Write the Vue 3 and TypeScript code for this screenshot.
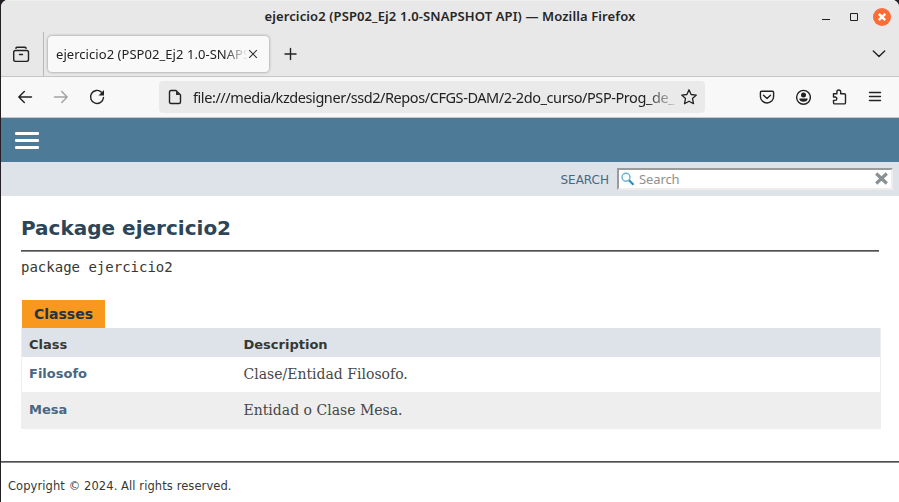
<script setup lang="ts">
interface ClassRow {
  name: string
  description: string
}

const windowTitle = 'ejercicio2 (PSP02_Ej2 1.0-SNAPSHOT API) — Mozilla Firefox'
const tabTitle = 'ejercicio2 (PSP02_Ej2 1.0-SNAPS'
const address = 'file:///media/kzdesigner/ssd2/Repos/CFGS-DAM/2-2do_curso/PSP-Prog_de_'
const rows: ClassRow[] = [
  { name: 'Filosofo', description: 'Clase/Entidad Filosofo.' },
  { name: 'Mesa', description: 'Entidad o Clase Mesa.' },
]
</script>

<template>
  <div class="desktop">
    <div class="window">
      <header class="titlebar">
        <span class="title">{{ windowTitle }}</span>
        <div class="controls">
          <svg width="74" height="32" viewBox="822 0 74 32">
            <path d="M822 18.5h8" class="ctl" />
            <path d="M850.5 12.500h7v7h-7z" class="ctl" />
            <circle cx="882" cy="16" r="9" fill="#fc6d35" />
            <path d="M878.800 12.800l6.400 6.400M885.200 12.800l-6.400 6.400" stroke="#fff" stroke-width="2.400" />
          </svg>
        </div>
      </header>

      <div class="tabbar">
        <div class="recent">
          <svg class="icon" width="18" height="18" viewBox="0 0 18 18">
            <path d="M3.800 3.200Q4.100 2.300 5.500 2.300h7Q13.900 2.300 14.200 3.200" />
            <rect x="1.700" y="5.500" width="14.800" height="10.900" rx="1.800" />
            <path d="M7.500 9.500h3" />
          </svg>
        </div>
        <div class="tab">
          <span class="tab-title">{{ tabTitle }}</span>
          <svg class="tab-close" width="10" height="10" viewBox="0 0 10 10"><path d="M1.200 1.200l7.600 7.600M8.800 1.200l-7.600 7.600" /></svg>
        </div>
        <svg class="icon plus" width="14" height="14" viewBox="0 0 14 14"><path d="M6.500 1.500v11M1 7h11" /></svg>
        <svg class="icon all-tabs" width="14" height="10" viewBox="0 0 14 10"><path d="M1.300 2l5.700 5.500L12.700 2" /></svg>
      </div>

      <div class="toolbar">
        <div class="nav-buttons">
          <svg class="icon" width="16" height="16" viewBox="0 0 16 16"><path d="M14.500 8H1.800M7.300 2.500L1.800 8l5.500 5.500" /></svg>
          <svg class="icon faded" width="16" height="16" viewBox="0 0 16 16"><path d="M1.500 8h12.700M8.700 2.500L14.200 8l-5.500 5.500" /></svg>
          <svg class="icon" width="16" height="16" viewBox="0 0 16 16">
            <path d="M12.500 3.200A6.500 6.500 0 1 0 14.500 8.500" />
            <path d="M15 1v5.500H9.500z" fill="#222" stroke="none" />
          </svg>
        </div>
        <div class="urlbar">
          <svg class="icon" width="14" height="16" viewBox="0 0 14 16">
            <path d="M3 1.500h5l4.500 4.500v7q0 1.500-1.500 1.500H3Q1.500 14.500 1.500 13V3Q1.500 1.500 3 1.500z" />
            <path d="M8 1.500V6h4.500z" fill="#333" stroke="none" />
          </svg>
          <span class="url">{{ address }}</span>
          <svg class="icon star" width="18" height="18" viewBox="0 0 18 18">
            <path d="M9 1.800l2.100 4.700 5.200.600-3.800 3.500 1 5.100L9 13.200l-4.500 2.500 1-5.100L1.700 7.100l5.200-.6z" />
          </svg>
        </div>
        <div class="actions">
          <svg class="icon" width="16" height="16" viewBox="0 0 16 16">
            <path d="M2.600 2.200h10.800q1.200 0 1.200 1.200v4a6.600 6.600 0 0 1-13.200 0v-4q0-1.200 1.200-1.200zM4.500 6.200L8 9.500l3.500-3.300" />
          </svg>
          <svg class="icon" width="16" height="16" viewBox="0 0 16 16">
            <circle cx="8.500" cy="8.300" r="6.900" />
            <circle cx="8.500" cy="6" r="2.500" fill="#222" stroke="none" />
            <path d="M4.300 9.500h8.400c0 2.100-1.800 3.300-4.200 3.300s-4.200-1.200-4.200-3.300z" fill="#222" stroke="none" />
          </svg>
          <svg class="icon" width="16" height="16" viewBox="0 0 16 16">
            <path d="M2.500 4.800h3.400V2.900a1.900 1.900 0 0 1 3.800 0v1.900h3.600q1.200 0 1.200 1.200v7.700q0 1.200-1.200 1.200H3.700q-1.200 0-1.200-1.200v-2.300h1.600a1.600 1.600 0 0 0 0-3.400H2.500z" />
          </svg>
          <svg class="icon" width="16" height="16" viewBox="0 0 16 16"><path d="M2.500 3.500h11M2.500 7.500h11M2.500 11.500h11" /></svg>
        </div>
      </div>

      <nav class="topnav">
        <div class="burger"><i></i><i></i><i></i></div>
      </nav>
      <div class="subnav">
        <label class="search-label">SEARCH</label>
        <div class="search-box">
          <svg width="14" height="14" viewBox="0 0 14 14">
            <circle cx="5" cy="5.300" r="4" fill="#fafeff" stroke="#69b1cd" stroke-width="1.400" />
            <path d="M8 8.300l4.500 4.500" stroke="#2d8fc7" stroke-width="2.300" />
          </svg>
          <span class="placeholder">Search</span>
          <svg class="clear" width="13" height="13" viewBox="0 0 13 13"><path d="M1.200 1.500l10.600 10M11.800 1.500l-10.600 10" stroke="#8b9094" stroke-width="3.200" /></svg>
        </div>
      </div>

      <main class="content">
        <h1>Package ejercicio2</h1>
        <div class="rule title-rule"></div>
        <div class="signature">package ejercicio2</div>
        <div class="caption">Classes</div>
        <div class="summary">
          <div class="row head"><span>Class</span><span>Description</span></div>
          <div v-for="row in rows" :key="row.name" class="row">
            <a>{{ row.name }}</a>
            <span class="desc">{{ row.description }}</span>
          </div>
        </div>
      </main>

      <div class="rule"></div>
      <footer class="footer">Copyright © 2024. All rights reserved.</footer>
    </div>
  </div>
</template>

<style>
body {
  background: #231f24;
  overflow: hidden;
}
</style>

<style scoped>
* {
  box-sizing: border-box;
}
svg {
  display: block;
  flex: none;
}
.desktop {
  width: 899px;
  height: 502px;
  padding-left: 1px;
  background: #231f24;
  overflow: hidden;
}
.window {
  height: 502px;
  display: flex;
  flex-direction: column;
  border-radius: 7px 7px 0 0;
  overflow: hidden;
  background: #fff;
  font-family: "DejaVu Sans", sans-serif;
  color: #353833;
}
.window > * {
  flex: none;
}
.titlebar {
  height: 32px;
  display: grid;
  grid-template-columns: 1fr auto 1fr;
  align-items: center;
  background: #e8e8e8;
  border-top: 1px solid #efefef;
}
.title {
  grid-column: 2;
  height: 32px;
  font: 600 13px/30px "Noto Sans", sans-serif;
  letter-spacing: 0.11px;
  color: #262626;
  white-space: nowrap;
}
.controls {
  justify-self: end;
  padding-right: 3px;
}
.ctl {
  fill: none;
  stroke: #1f1f1f;
}
.tabbar {
  height: 45px;
  display: flex;
  align-items: center;
  background: #e8e8e8;
  border-bottom: 1px solid #c5c5c5;
}
.icon {
  fill: none;
  stroke: #222;
  stroke-width: 1.4;
  stroke-linejoin: round;
  stroke-linecap: round;
}
.faded {
  opacity: 0.4;
}
.star {
  stroke-width: 1.3;
}
.recent {
  width: 43px;
  height: 44px;
  display: flex;
  align-items: center;
  padding-left: 11px;
  border-right: 1px solid #b8b8b8;
}
.tab {
  width: 221px;
  height: 36px;
  margin-left: 4px;
  padding: 0 11px 0 8px;
  display: flex;
  align-items: center;
  border-radius: 4px;
  background: #f9f9fa;
  box-shadow: 0 0 3px rgba(0, 0, 0, 0.42);
}
.tab-title {
  width: 192px;
  flex: none;
  white-space: nowrap;
  font: 13px/20px "Noto Sans", sans-serif;
  letter-spacing: 0.05px;
  color: #222;
  mask-image: linear-gradient(to right, #000 168px, transparent 192px);
}
.tab-close {
  fill: none;
  stroke: #333;
  stroke-width: 1.2;
}
.plus {
  margin-left: 15px;
}
.all-tabs {
  margin-left: auto;
  margin-right: 13px;
}
.toolbar {
  height: 41px;
  display: flex;
  align-items: center;
  padding: 0 16px;
  background: #f8f8f8;
  border-bottom: 1px solid #c4c8cb;
}
.nav-buttons {
  display: flex;
  gap: 20px;
}
.urlbar {
  width: 546px;
  height: 32px;
  margin-left: 54px;
  padding: 0 7px 0 9px;
  display: flex;
  align-items: center;
  border-radius: 4px;
  background: #eaeaea;
}
.url {
  width: 482px;
  flex: none;
  margin-left: 11px;
  margin-right: 5px;
  white-space: nowrap;
  font: 14.500px/24px "Noto Sans", sans-serif;
  letter-spacing: -0.43px;
  color: #222;
  mask-image: linear-gradient(to right, #000 454px, transparent 486px);
}
.actions {
  display: flex;
  gap: 20px;
  margin-left: auto;
}
.topnav {
  height: 44px;
  padding: 14px 0 0 14px;
  background: #4d7a97;
}
.burger {
  width: 24px;
  display: grid;
  gap: 4px;
}
.burger i {
  height: 3px;
  border-radius: 1px;
  background: #fff;
}
.subnav {
  height: 34px;
  display: flex;
  align-items: center;
  justify-content: flex-end;
  gap: 8px;
  padding: 0 6px 0 0;
  background: #dee3e9;
}
.search-label {
  padding-top: 2px;
  font-size: 12px;
  color: #4a6782;
}
.search-box {
  width: 276px;
  height: 22px;
  display: flex;
  align-items: center;
  padding: 0 3px 0 2px;
  background: #fff;
  border: 2px solid;
  border-color: #9b9b9b #ededed #ededed #9b9b9b;
}
.clear {
  margin-bottom: 2px;
}
.placeholder {
  flex: 1;
  margin-left: 4px;
  font: 13px/18px "Noto Sans", sans-serif;
  letter-spacing: -0.1px;
  color: #909090;
}
.content {
  height: 265px;
  padding: 20px 19px 0 20px;
}
h1 {
  height: 34px;
  margin: 0;
  font-size: 20px;
  line-height: 24px;
  color: #2c4557;
}
.rule {
  height: 2px;
  background: linear-gradient(#505054 50%, #868686 50%);
}
.title-rule {
  margin-right: 1px;
}
.signature {
  height: 48px;
  padding-top: 5px;
  font: 14px/20px "DejaVu Sans Mono", monospace;
}
.caption {
  width: 83px;
  height: 28px;
  margin-left: 1px;
  padding-left: 12px;
  font-size: 14px;
  font-weight: bold;
  line-height: 28px;
  background: #f8981d;
  color: #253441;
}
.summary {
  width: 860px;
  border: solid #eee;
  border-width: 0 1px;
}
.row {
  height: 35px;
  display: grid;
  grid-template-columns: 214.500px 1fr;
  padding-left: 7px;
  font-size: 13px;
  line-height: 33px;
  font-weight: bold;
}
.row.head {
  height: 29px;
  line-height: 33px;
  background: #dee3e9;
}
.row:last-child {
  height: 37px;
  line-height: 35px;
  background: #eee;
}
.row a {
  color: #4a6782;
}
.desc {
  font: 14px/35px "DejaVu Serif", serif;
  color: #474747;
}
.row:last-child .desc {
  line-height: 37px;
}
.footer {
  height: 39px;
  padding: 13px 7px 0;
  font-size: 11.500px;
  line-height: 20px;
  letter-spacing: 0.085px;
}
</style>
